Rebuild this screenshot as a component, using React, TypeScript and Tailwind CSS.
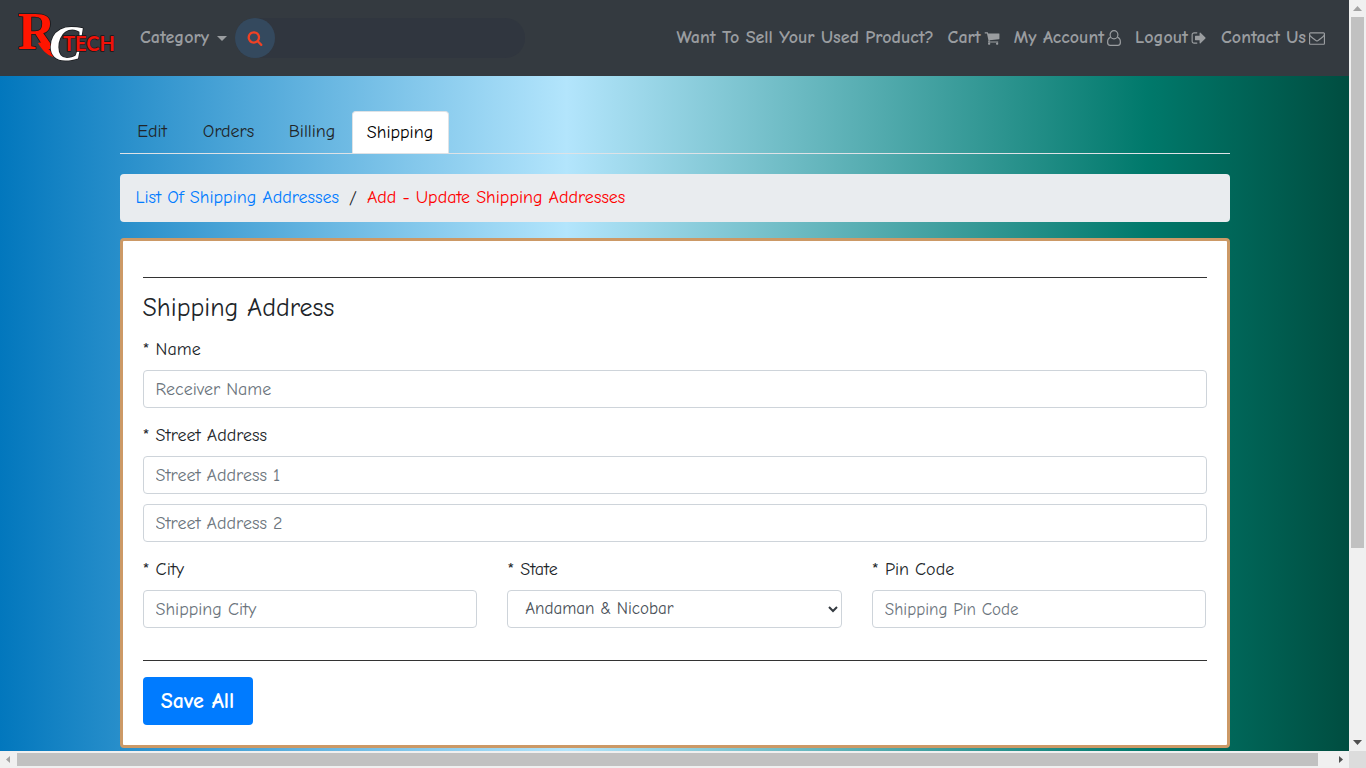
import React from "react";

const ICONS = {
  search:
    "M1216 832q0-185-131.5-316.5t-316.5-131.5-316.5 131.5-131.5 316.5 131.5 316.5 316.5 131.5 316.5-131.5 131.5-316.5zm512 832q0 52-38 90t-90 38q-54 0-90-38l-343-342q-179 124-399 124-143 0-273.5-55.5t-225-150-150-225-55.5-273.5 55.5-273.5 150-225 225-150 273.5-55.5 273.5 55.5 225 150 150 225 55.5 273.5q0 220-124 399l343 343q37 37 37 90z",
  cart:
    "M704 1536q0 52-38 90t-90 38-90-38-38-90 38-90 90-38 90 38 38 90zm896 0q0 52-38 90t-90 38-90-38-38-90 38-90 90-38 90 38 38 90zm128-1088v512q0 24-16.5 42.5t-40.5 21.5l-1044 122q13 60 13 70 0 16-24 64h920q26 0 45 19t19 45-19 45-45 19h-1024q-26 0-45-19t-19-45q0-11 8-31.5t16-36 21.5-40 15.5-29.5l-177-823h-204q-26 0-45-19t-19-45 19-45 45-19h256q16 0 28.5 6.5t19.5 15.5 13 24.5 8 26 5.5 29.5 4.5 26h1201q26 0 45 19t19 45z",
  logout:
    "M704 1440q0 4 1 20t.5 26.5-3 23.5-10 19.5-20.5 6.500h-320q-119 0-203.5-84.500t-84.500-203.500v-704q0-119 84.500-203.500t203.500-84.500h320q13 0 22.500 9.500t9.500 22.500q0 4 1 20t.5 26.500-3 23.500-10 19.500-20.500 6.500h-320q-66 0-113 47t-47 113v704q0 66 47 113t113 47h312l11.500 1 11.500 3 8 5.500 7 9 2 13.500zm928-544q0 26-19 45l-544 544q-19 19-45 19t-45-19-19-45v-288h-448q-26 0-45-19t-19-45v-384q0-26 19-45t45-19h448v-288q0-26 19-45t45-19 45 19l544 544q19 19 19 45z",
  envelope:
    "M1664 1504v-768q-32 36-69 66-268 206-426 338-51 43-83 67t-86.500 48.500-102.500 24.500h-2q-48 0-102.500-24.500t-86.500-48.500-83-67q-158-132-426-338-37-30-69-66v768q0 13 9.500 22.500t22.500 9.500h1472q13 0 22.500-9.500t9.500-22.500zm0-1051v-24.500l-.5-13-3-12.500-5.500-9-9-7.500-14-2.500h-1472q-13 0-22.500 9.500t-9.500 22.500q0 168 147 284 193 152 401 317 6 5 35 29.500t46 37.500 44.500 31.500 50.500 27.500 43 9h2q20 0 43-9t50.500-27.500 44.500-31.500 46-37.500 35-29.500q208-165 401-317 54-43 100.500-115.500t46.500-131.500zm128-37v1088q0 66-47 113t-113 47h-1472q-66 0-113-47t-47-113v-1088q0-66 47-113t113-47h1472q66 0 113 47t47 113z",
};

function Icon({ name }: { name: keyof typeof ICONS }) {
  return (
    <svg viewBox="0 0 1792 1792" className="size-4 shrink-0 fill-current" aria-hidden="true">
      <path d={ICONS[name]} />
    </svg>
  );
}

function UserIcon() {
  return (
    <svg viewBox="0 0 14 16" className="h-4 w-[14px] shrink-0" fill="none" stroke="currentColor" strokeWidth="1.2" aria-hidden="true">
      <ellipse cx="7" cy="4.700" rx="3.900" ry="4.100" />
      <path d="M3.700 7.300C1.400 7.700.6 9.900.6 12.200c0 2 1 3.200 2.600 3.200h7.600c1.600 0 2.600-1.200 2.600-3.200 0-2.300-.8-4.500-3.100-4.900" />
    </svg>
  );
}

function Logo() {
  return (
    <svg viewBox="0 0 100 76" className="h-[76px] w-[100px]" role="img" aria-label="RC Tech">
      <g stroke="#15171a" strokeWidth="1.500" paintOrder="stroke" strokeLinejoin="round">
        <text x="2" y="49" fontSize="52" fill="#ff1500" fontFamily="Liberation Serif, serif">R</text>
        <path d="M27 42C30 47 34 51 38 54L37 57C31 55 26 50 22 43z" fill="#ff1500" stroke="none" />
        <text x="33" y="60" fontSize="50" fontStyle="italic" fontWeight="700" fill="#fff" fontFamily="Liberation Serif, serif">C</text>
        <text x="47" y="51" fontSize="20" fill="#f01208" fontFamily="Lato, sans-serif">TECH</text>
      </g>
    </svg>
  );
}

const tabs = [
  { label: "Edit", width: "w-[65px]" },
  { label: "Orders", width: "w-[88px]" },
  { label: "Billing", width: "w-[79px]" },
  { label: "Shipping", width: "w-[97px]" },
];

const control =
  "h-[38px] w-full rounded border border-[#ced4da] bg-white text-[#495057] placeholder:text-[#6c757d] outline-none focus:border-[#80bdff]";

function Field({ id, label, children }: { id: string; label: string; children: React.ReactNode }) {
  return (
    <div className="flex min-w-0 flex-col gap-2">
      <label htmlFor={id} className="leading-6">* {label}</label>
      {children}
    </div>
  );
}

function Header() {
  return (
    <header className="flex h-[76px] shrink-0 items-center bg-[#343a40] pl-4 pr-6 text-lg font-bold text-[#9a9da0]">
      <a href="#home"><Logo /></a>
      <button type="button" className="ml-6 flex items-center gap-2">
        Category
        <span className="border-x-[5px] border-t-[5px] border-x-transparent border-t-current" />
      </button>
      <form className="ml-2 flex h-10 w-[290px] rounded-full bg-[#30363f]" onSubmit={(e) => e.preventDefault()}>
        <button type="submit" aria-label="Search" className="flex size-10 shrink-0 items-center justify-center rounded-full bg-[#34495e] text-[#f04124]">
          <Icon name="search" />
        </button>
        <input type="text" aria-label="Search products" className="min-w-0 flex-1 bg-transparent px-2 outline-none" />
      </form>
      <nav className="ml-auto flex gap-3.5 whitespace-nowrap">
        <a href="#sell">Want To Sell Your Used Product?</a>
        <a href="#cart" className="flex items-center gap-[3px]">Cart <Icon name="cart" /></a>
        <a href="#account" className="flex items-center gap-[3px]">My Account <UserIcon /></a>
        <a href="#logout" className="flex items-center gap-[3px]">Logout <Icon name="logout" /></a>
        <a href="#contact" className="flex items-center gap-[3px]">Contact Us <Icon name="envelope" /></a>
      </nav>
    </header>
  );
}

function ShippingForm() {
  return (
    <form className="mt-4 rounded border-[3px] border-[#cc9966] bg-white p-5" onSubmit={(e) => e.preventDefault()}>
      <hr className="mt-4 border-[#333]" />
      <h1 className="mt-4 text-[26px] leading-7">Shipping Address</h1>
      <div className="mt-4 flex flex-col gap-4">
        <Field id="name" label="Name">
          <input id="name" className={`${control} px-3 text-lg`} placeholder="Receiver Name" />
        </Field>
        <Field id="street1" label="Street Address">
          <input id="street1" className={`${control} px-3 text-lg`} placeholder="Street Address 1" />
          <input aria-label="Street Address 2" className={`${control} mt-0.5 px-3 text-lg`} placeholder="Street Address 2" />
        </Field>
        <div className="grid grid-cols-3 gap-[30px]">
          <Field id="city" label="City">
            <input id="city" className={`${control} px-3 text-lg`} placeholder="Shipping City" />
          </Field>
          <Field id="state" label="State">
            <div className="relative">
              <select id="state" className={`${control} appearance-none px-[17px] text-[17px]`}>
                <option>Andaman &amp; Nicobar</option>
              </select>
              <svg viewBox="0 0 10 7" className="pointer-events-none absolute right-1 top-4 h-[7px] w-[10px]" fill="none" stroke="#343a40" strokeWidth="2" aria-hidden="true">
                <path d="M1 1l4 4 4-4" />
              </svg>
            </div>
          </Field>
          <Field id="pin" label="Pin Code">
            <input id="pin" className={`${control} px-3 text-[17px]`} placeholder="Shipping Pin Code" />
          </Field>
        </div>
      </div>
      <hr className="mt-8 border-[#333]" />
      <button type="submit" className="mt-4 h-12 w-[110px] rounded bg-[#007bff] text-[22px] font-bold text-white">Save All</button>
    </form>
  );
}

function Arrow({ points }: { points: string }) {
  return (
    <svg viewBox="0 0 17 17" className="size-[17px] shrink-0" aria-hidden="true">
      <polygon points={points} fill="currentColor" />
    </svg>
  );
}

export default function App() {
  return (
    <div className="grid h-screen grid-cols-[minmax(0,1fr)_17px] grid-rows-[minmax(0,1fr)_17px] bg-[#f0f0f0] font-['Comic_Sans_MS','Comic_Neue','Noto_Sans',sans-serif] text-lg text-[#212529]">
      <div className="flex flex-col overflow-hidden bg-[linear-gradient(90deg,#0277bd_0%,#b3e5fc_42%,#00796b_85%,#004d40_100%)]">
        <Header />
        <main className="mx-auto w-full max-w-[1110px] pt-[35px]">
          <nav className="flex border-b border-[#dee2e6]">
            {tabs.map((tab) => (
              <a
                key={tab.label}
                href={`#${tab.label.toLowerCase()}`}
                className={`${tab.width} flex h-[42px] items-center justify-center rounded-t ${
                  tab.label === "Shipping" ? "border border-b-0 border-[#dee2e6] bg-white text-black" : ""
                }`}
              >
                {tab.label}
              </a>
            ))}
          </nav>
          <nav aria-label="Breadcrumb" className="mt-5 flex h-12 items-center gap-2.5 rounded bg-[#e9ecef] px-4">
            <a href="#list" className="text-[#007bff]">List Of Shipping Addresses</a>
            <span>/</span>
            <a href="#add" className="text-[#ff0000]">Add - Update Shipping Addresses</a>
          </nav>
          <ShippingForm />
        </main>
      </div>
      <div className="flex flex-col items-center text-[#505050]">
        <span className="flex text-[#a3a3a3]"><Arrow points="4,11 8.500,6 13,11" /></span>
        <div className="flex w-[13px] flex-1 flex-col">
          <div className="h-[74%] bg-[#c1c1c1]" />
        </div>
        <Arrow points="4,6 13,6 8.500,11" />
      </div>
      <div className="flex items-center text-[#505050]">
        <span className="text-[#a3a3a3]"><Arrow points="10,5 10,12 6,8.500" /></span>
        <div className="mr-3.5 h-[13px] flex-1 bg-[#c1c1c1]" />
        <Arrow points="7,5 7,12 11,8.500" />
      </div>
      <div className="bg-[#dcdcdc]" />
    </div>
  );
}
